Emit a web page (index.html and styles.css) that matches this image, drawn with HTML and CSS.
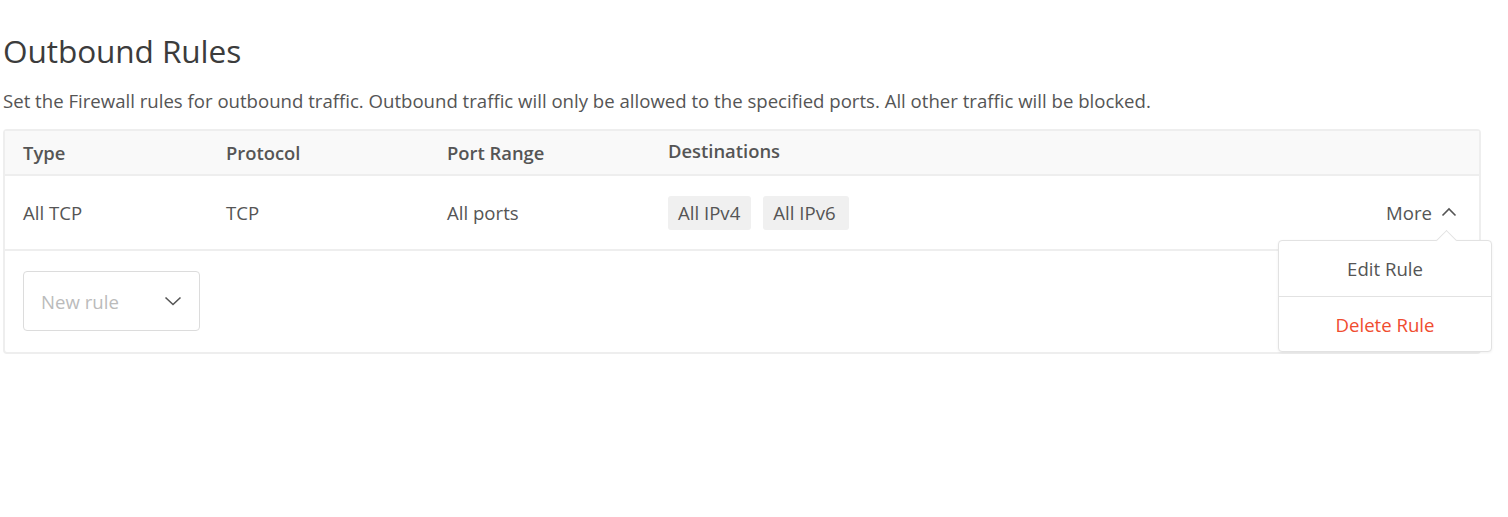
FILE: index.html
```html
<!DOCTYPE html>
<html lang="en">
<head>
<meta charset="utf-8">
<title>Outbound Rules</title>
<link rel="stylesheet" href="styles.css">
</head>
<body>
<section class="page">
  <h2 class="title">Outbound Rules</h2>
  <p class="desc">Set the Firewall rules for outbound traffic. Outbound traffic will only be allowed to the specified ports. All other traffic will be blocked.</p>
  <div class="card">
    <div class="row head">
      <div class="cell">Type</div>
      <div class="cell">Protocol</div>
      <div class="cell">Port Range</div>
      <div class="cell dest-h">Destinations</div>
      <div class="cell"></div>
    </div>
    <div class="row body">
      <div class="cell">All TCP</div>
      <div class="cell">TCP</div>
      <div class="cell">All ports</div>
      <div class="cell tags"><span class="tag">All IPv4</span><span class="tag">All IPv6</span></div>
      <div class="cell more-wrap">
        <span class="more">More
          <svg class="chev" width="16" height="10" viewBox="0 0 16 10"><path d="M1.5 8.5 L8 2 L14.5 8.5" fill="none" stroke="#555" stroke-width="1.6"/></svg>
        </span>
        <div class="menu">
          <div class="menu-item">Edit Rule</div>
          <div class="menu-item danger">Delete Rule</div>
        </div>
      </div>
    </div>
    <div class="foot">
      <div class="select">
        <span>New rule</span>
        <svg width="18" height="10" viewBox="0 0 18 10"><path d="M1.5 1.5 L9 8.5 L16.5 1.5" fill="none" stroke="#555" stroke-width="1.6"/></svg>
      </div>
    </div>
  </div>
</section>
</body>
</html>
```
FILE: styles.css
```css
* { box-sizing: border-box; }
html, body { margin: 0; padding: 0; background: #fff; }
body {
  font-family: "Open Sans", Lato, "Liberation Sans", sans-serif;
  color: #555;
}
.page { padding: 0 0 0 3px; }
.title {
  margin: 0;
  padding-top: 32px;
  font-size: 31.6px;
  font-weight: 400;
  color: #3c3c3c;
  line-height: 38px;
  letter-spacing: -0.1px;
}
.desc {
  margin: 0;
  padding-top: 19px;
  font-size: 18.6px;
  line-height: 24px;
  color: #555;
}
.card {
  margin-top: 16px;
  width: 1478px;
  border: 2px solid #eeeeee;
  border-radius: 4px;
}
.row {
  display: grid;
  grid-template-columns: 203px 221px 221px 1fr auto;
  align-items: center;
  padding: 0 22px 0 18px;
}
.head {
  height: 45px;
  background: #f9f9f9;
  border-bottom: 2px solid #eeeeee;
  font-weight: 600;
  font-size: 18.4px;
}
.dest-h { position: relative; top: -2px; }
.body {
  height: 75px;
  border-bottom: 2px solid #eeeeee;
  font-size: 18.6px;
}
.tags { display: flex; gap: 12px; }
.tag {
  display: inline-flex;
  align-items: center;
  height: 34px;
  padding: 0 11px 0 10px;
  background: #f0f0f0;
  border-radius: 3px;
}
.tag + .tag { padding-right: 13px; }
.more-wrap { position: relative; }
.more {
  display: inline-flex;
  align-items: center;
  gap: 9px;
}
.chev { margin-top: -2px; }
.menu {
  position: absolute;
  top: 40px;
  right: -35px;
  width: 214px;
  background: #fff;
  border: 1px solid #e2e2e2;
  border-radius: 4px;
  box-shadow: 0 1px 3px rgba(0,0,0,0.06);
  z-index: 2;
}
.menu::before {
  content: "";
  position: absolute;
  top: -8px;
  right: 37px;
  width: 14px;
  height: 14px;
  background: #fff;
  border-left: 1px solid #e2e2e2;
  border-top: 1px solid #e2e2e2;
  transform: rotate(45deg);
}
.menu-item {
  position: relative;
  height: 55px;
  display: flex;
  align-items: center;
  justify-content: center;
  font-size: 18.6px;
  color: #555;
}
.menu-item + .menu-item { border-top: 1px solid #e2e2e2; }
.danger { color: #f04c2f; }
.foot {
  height: 101px;
  padding: 20px 0 0 18px;
}
.select {
  width: 177px;
  height: 60px;
  border: 1px solid #dcdcdc;
  border-radius: 4px;
  display: flex;
  align-items: center;
  justify-content: space-between;
  padding: 0 17px 0 17px;
  font-size: 18.6px;
  color: #bbb;
}
```
